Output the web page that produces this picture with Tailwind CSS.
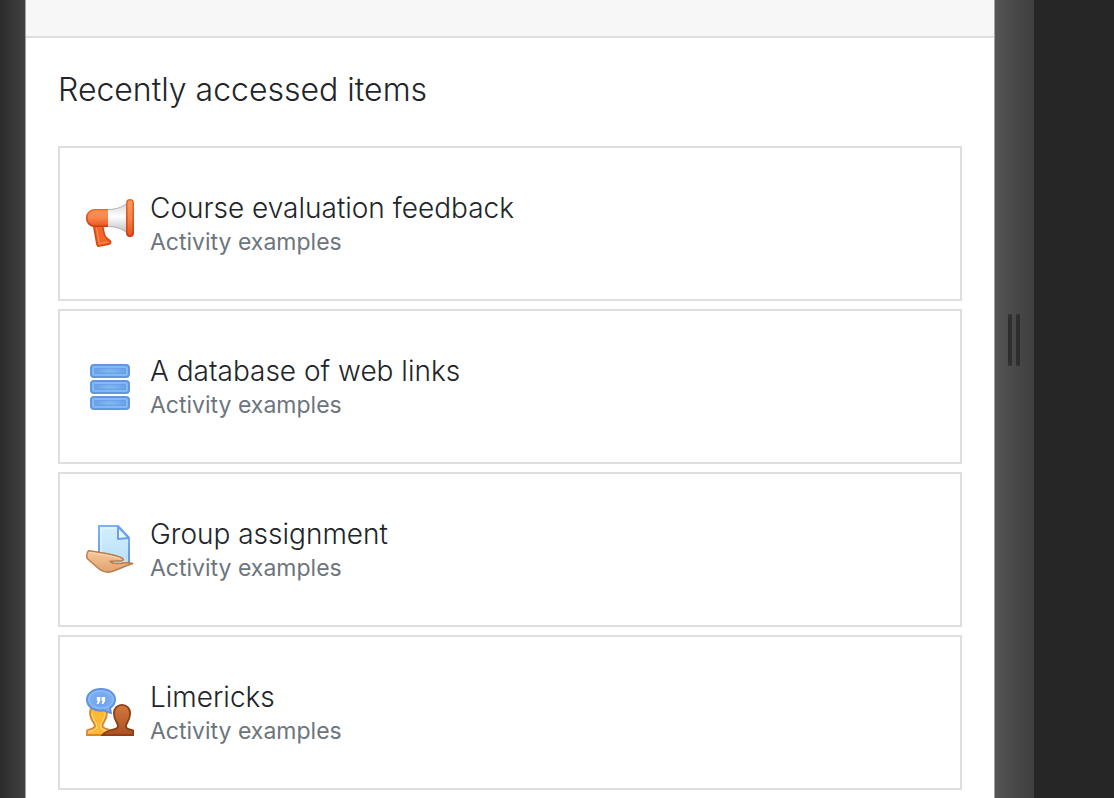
<!DOCTYPE html>
<html lang="en">
<head>
  <meta charset="UTF-8" />
  <meta name="viewport" content="width=device-width, initial-scale=1.0" />
  <title>Recently accessed items</title>
  <script src="https://cdn.jsdelivr.net/npm/@tailwindcss/browser@4"></script>
</head>
<body class="bg-[#262626] font-['Inter','Liberation_Sans',sans-serif] text-[#212529]">
  <div class="flex min-h-screen">
    <div class="w-[25px] shrink-0 bg-linear-to-r from-[#2c2c2c] to-[#424242]"></div>

    <main class="flex-1 min-w-0 bg-white border-x border-[#a3a3a3]">
      <div class="h-[38px] bg-[#f7f7f7] border-b-2 border-[#dedede]"></div>

      <section class="px-8 pt-8 pb-2">
        <h2 class="text-[32px] leading-10 font-light mb-9">Recently accessed items</h2>

        <div class="flex flex-col gap-2">
          <a href="#" class="flex items-center gap-4 h-[155px] px-[26px] pb-0.5 border-2 border-[#dedede]">
            <svg class="size-12 shrink-0" viewBox="0 0 48 48" fill="none" aria-hidden="true">
              <defs>
                <linearGradient id="fb-body" x1="0" y1="0" x2="0" y2="1">
                  <stop offset="0" stop-color="#fb9657" />
                  <stop offset=".5" stop-color="#f9854a" />
                  <stop offset="1" stop-color="#ea4f1b" />
                </linearGradient>
                <linearGradient id="fb-cone" x1="0" y1="0" x2="0" y2="1">
                  <stop offset="0" stop-color="#d6d6d6" />
                  <stop offset=".45" stop-color="#ffffff" />
                  <stop offset="1" stop-color="#bdbdbd" />
                </linearGradient>
                <linearGradient id="fb-edge" x1="0" y1="0" x2="0" y2="1">
                  <stop offset="0" stop-color="#e0702e" />
                  <stop offset="1" stop-color="#cf3c0e" />
                </linearGradient>
              </defs>
              <path d="M7.5 26L11 45.5C11.3 47 12 47.3 13.5 47L22.5 45.3C25 44.8 25.3 43 23.8 41.6L20.5 39C18 37 17.5 31 16.6 27Z" fill="#f4662a" stroke="#d2480f" stroke-width="1.6" />
              <path d="M10.5 29L13.3 44.5L21.5 43" stroke="#fa8a50" stroke-width="1.2" />
              <path d="M22 10C30 10 35 8 41 4V34C35 30 30 28 22 28Z" fill="url(#fb-cone)" />
              <path d="M22 10.5C30 10.5 35 8.5 41 4.5M22 27.5C30 27.5 35 29.5 41 33.5" stroke="#b5b5b5" />
              <path d="M22 10H9C3.5 10 0 14 0 19S3.5 28 9 28H22Z" fill="url(#fb-body)" />
              <path d="M22 10.8H9C4 10.8 .8 14.5 .8 19S4 27.2 9 27.2H22" stroke="url(#fb-edge)" stroke-width="1.6" />
              <rect x="40.8" y=".8" width="6.4" height="36.4" rx="3.2" fill="url(#fb-body)" stroke="url(#fb-edge)" stroke-width="1.6" />
            </svg>
            <div class="min-w-0">
              <h3 class="text-[28px] leading-[38px] font-light">Course evaluation feedback</h3>
              <p class="text-[23px] leading-[30px] text-[#6c757d]">Activity examples</p>
            </div>
          </a>

          <a href="#" class="flex items-center gap-4 h-[155px] px-[26px] pb-0.5 border-2 border-[#dedede]">
            <svg class="size-12 shrink-0" viewBox="0 0 48 48" fill="none" aria-hidden="true">
              <defs>
                <radialGradient id="db-fill">
                  <stop offset="0" stop-color="#86bdf3" />
                  <stop offset="1" stop-color="#6b9fe9" />
                </radialGradient>
              </defs>
              <g fill="#81b9f5" stroke="#6496dc" stroke-width="2">
                <rect x="5" y="3" width="38" height="12" rx="3" />
                <rect x="5" y="19" width="38" height="12" rx="3" />
                <rect x="5" y="35" width="38" height="12" rx="3" />
              </g>
              <rect x="8" y="6" width="32" height="6" fill="url(#db-fill)" />
              <rect x="8" y="22" width="32" height="6" fill="url(#db-fill)" />
              <rect x="8" y="38" width="32" height="6" fill="url(#db-fill)" />
            </svg>
            <div class="min-w-0">
              <h3 class="text-[28px] leading-[38px] font-light">A database of web links</h3>
              <p class="text-[23px] leading-[30px] text-[#6c757d]">Activity examples</p>
            </div>
          </a>

          <a href="#" class="flex items-center gap-4 h-[155px] px-[26px] pb-0.5 border-2 border-[#dedede]">
            <svg class="size-12 shrink-0" viewBox="0 0 48 48" fill="none" aria-hidden="true">
              <defs>
                <linearGradient id="as-page" x1="0" y1="0" x2="0" y2="1">
                  <stop offset="0" stop-color="#d2effc" />
                  <stop offset="1" stop-color="#b9e0f7" />
                </linearGradient>
                <linearGradient id="as-edge" x1="0" y1="0" x2="0" y2="1">
                  <stop offset="0" stop-color="#7bb2f3" />
                  <stop offset="1" stop-color="#6794e2" />
                </linearGradient>
                <linearGradient id="as-hand" x1="0" y1="0" x2="0" y2="1">
                  <stop offset="0" stop-color="#f8c99c" />
                  <stop offset="1" stop-color="#dfa26f" />
                </linearGradient>
              </defs>
              <path d="M13 1H32L43 13V39H13Z" fill="url(#as-page)" stroke="url(#as-edge)" stroke-width="2" />
              <path d="M15 36V3H31" stroke="#eaf8ff" />
              <path d="M32 1.5V14L43 13Z" fill="#e5f6ff" stroke="#6b9eea" stroke-width="2" stroke-linejoin="round" />
              <path d="M2.5 25.7C8 26.5 14 27.5 19 28.3C25 29.5 33 31 36.5 33.3C38.5 35 36.5 36 34 36L24 36.3C25 38 30 38.7 35 38.3C40 37.5 43 37.5 46.8 38.5C39 41 32 44.5 25 46.8C20 48 16 46.5 12 43L1.2 33.5C.5 30.5 1 27 2.5 25.7Z" fill="url(#as-hand)" stroke="#bd7c49" stroke-width="1.5" stroke-linejoin="round" />
              <path d="M3.3 27.3L19 29.9C25 31 31 32.3 34.5 34" stroke="#fddcb9" />
            </svg>
            <div class="min-w-0">
              <h3 class="text-[28px] leading-[38px] font-light">Group assignment</h3>
              <p class="text-[23px] leading-[30px] text-[#6c757d]">Activity examples</p>
            </div>
          </a>

          <a href="#" class="flex items-center gap-4 h-[155px] px-[26px] pb-0.5 border-2 border-[#dedede]">
            <svg class="size-12 shrink-0" viewBox="0 0 48 48" fill="none" aria-hidden="true">
              <defs>
                <linearGradient id="fo-dark" x1="0" y1="0" x2="0" y2="1">
                  <stop offset="0" stop-color="#d07a3d" />
                  <stop offset="1" stop-color="#ad4f22" />
                </linearGradient>
                <radialGradient id="fo-bubble">
                  <stop offset="0" stop-color="#6b9deb" />
                  <stop offset="1" stop-color="#80b4f2" />
                </radialGradient>
              </defs>
              <path d="M1 47V42.5C3 41.5 8.5 41 9 38C9.3 35.5 4 32 4 25C4 19 8 15 12.5 15S21 19 21 25C21 32 16 35.5 16.5 38C17 41 22 41.5 27 43V47Z" fill="#fdb931" stroke="#dc8430" stroke-width="1.8" />
              <path d="M3 45V43.5C6 42.5 10.5 42 11 38.5C11.3 35 6 31.5 6 25M19 25C19 31.5 14 35 14.5 38.5C15 41 18 42 20 42.5" stroke="#fdd577" stroke-width="1.3" />
              <path d="M16.5 47C19 43.5 23 42.5 27 41.5C30.5 40.8 32.5 40 32 37.5C31.5 35 27.9 31.5 27.9 25.5C27.9 20 31.5 16.9 36 16.9S44.1 20 44.1 25.5C44.1 31.5 40.5 35 40 37.5C39.7 40 41 41 43.5 41.5L47.1 42.5V47.1Z" fill="url(#fo-dark)" stroke="#8a3f15" stroke-width="1.8" />
              <path d="M15 1C23 1 29 5.5 29 11.5C29 15 27 18 24 20L25 25.2L18 22.3C8 24 1 18.5 1 11.5C1 5.5 7 1 15 1Z" fill="url(#fo-bubble)" stroke="#6292dc" stroke-width="2" stroke-linejoin="round" />
              <ellipse cx="15" cy="11.5" rx="12.3" ry="8.7" stroke="#92c6fa" />
              <path d="M10.8 9H14.4V12.8L12.6 16H10.6L11.8 12.8H10.8ZM15.6 9H19.2V12.8L17.4 16H15.4L16.6 12.8H15.6Z" fill="#fff" />
            </svg>
            <div class="min-w-0">
              <h3 class="text-[28px] leading-[38px] font-light">Limericks</h3>
              <p class="text-[23px] leading-[30px] text-[#6c757d]">Activity examples</p>
            </div>
          </a>
        </div>
      </section>
    </main>

    <!-- resize handle -->
    <div class="w-[39px] shrink-0 bg-linear-to-r from-[#555555] via-[#484848] to-[#404040] flex justify-center gap-1 pt-[314px] pr-0.5">
      <span class="w-1 h-[52px] rounded-sm bg-[#2e2e2e]"></span>
      <span class="w-1 h-[52px] rounded-sm bg-[#2e2e2e]"></span>
    </div>
    <div class="w-20 shrink-0"></div>
  </div>
</body>
</html>
